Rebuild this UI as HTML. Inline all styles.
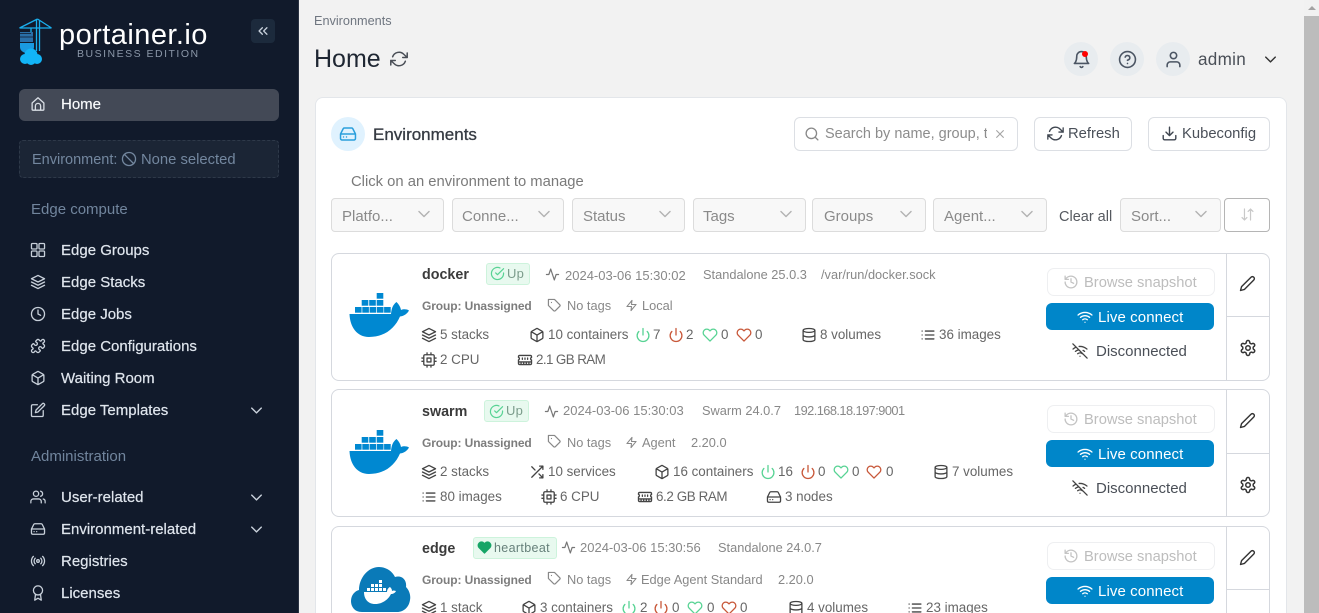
<!DOCTYPE html>
<html><head><meta charset="utf-8"><title>Portainer</title>
<style>
html,body{margin:0;padding:0;width:1319px;height:613px;overflow:hidden;background:#f2f2f2;font-family:"Liberation Sans",sans-serif}
#w{position:relative;width:1319px;height:613px;overflow:hidden;background:#f2f2f2}
.a{position:absolute}
.t{position:absolute;white-space:nowrap;height:20px;line-height:20px;font-size:15px;margin-top:1px}
.i{position:absolute;fill:none;stroke:currentColor;stroke-width:2;stroke-linecap:round;stroke-linejoin:round;width:14px;height:14px;overflow:visible;transform:scale(1.12)}
.s16{width:16px;height:16px}
.n{left:61px;color:#dfe5ed;-webkit-text-stroke:.2px #dfe5ed}
.h{left:31px;color:#71859d}
.ni{left:31px;color:#c8d0da}
.cv{width:17px;height:17px;margin:-1.5px 0 0 -1.5px;stroke-width:1.8}
.f{position:absolute;top:198px;height:32px;background:#f8f8f8;border:1px solid #dcdcdc;border-radius:4px}
.ft{color:#8a8a8a;top:206px}
.chv{color:#b3b3b3;top:207px;width:18px;height:18px;margin:-2px 0 0 -2px;stroke-width:1.7}
.row{position:absolute;left:331px;width:937px;height:126px;border:1px solid #d5d8de;border-radius:8px;background:#fff}
.nm{left:422px;font-weight:bold;font-size:14.3px;color:#3b3b3b}
.g{font-size:12.8px;color:#888;margin-top:0}
.dt{font-size:13px}
.gb{left:422px;font-size:12px;font-weight:bold;color:#7d7d7d;letter-spacing:-.1px;margin-top:0}
.d{font-size:13.4px;color:#666;margin-top:0}
.ic{color:#444}
.ig{color:#58d394}.ir{color:#c8583a}
.bs{position:absolute;left:1047px;width:166px;height:26px;border:1px solid #eeeff1;border-radius:7px;background:#fff}
.lc{position:absolute;left:1046px;width:168px;height:27px;background:#0086c9;border-radius:6px}
.badge{position:absolute;height:20px;background:#e8f9ef;border:1px solid #cdf3dc;border-radius:3px}
.br{left:1084px;color:#bdbdbd;font-size:14.7px}
.lt{left:1098px;color:#fff;letter-spacing:.1px}
.dc{left:1096px;color:#4a4f57}
</style></head>
<body><div id="w">
<svg width="0" height="0" style="position:absolute"><defs>
<symbol id="home" viewBox="0 0 24 24"><path d="M3 10.5l9-8 9 8V20a1.5 1.5 0 0 1-1.5 1.5h-15A1.5 1.5 0 0 1 3 20zM8 21v-6a4 4 0 0 1 8 0v6"/></symbol>
<symbol id="grid" viewBox="0 0 24 24"><rect x="2" y="2" width="8.5" height="8.5" rx="1.5"/><rect x="13.5" y="2" width="8.5" height="8.5" rx="1.5"/><rect x="13.5" y="13.5" width="8.5" height="8.5" rx="1.5"/><rect x="2" y="13.5" width="8.5" height="8.5" rx="1.5"/></symbol>
<symbol id="layers" viewBox="0 0 24 24"><path d="M12 2L2 7l10 5 10-5-10-5zM2 17l10 5 10-5M2 12l10 5 10-5"/></symbol>
<symbol id="clock" viewBox="0 0 24 24"><circle cx="12" cy="12" r="10"/><path d="M12 6v6l4 2"/></symbol>
<symbol id="puzzle" viewBox="0 0 24 24"><path d="M19.439 7.85c-.049.322.059.648.289.878l1.568 1.568c.47.47.706 1.087.706 1.704s-.235 1.233-.706 1.704l-1.611 1.611a.98.98 0 0 1-.837.276c-.47-.07-.802-.48-.968-.925a2.501 2.501 0 1 0-3.214 3.214c.446.166.855.497.925.968a.979.979 0 0 1-.276.837l-1.61 1.61a2.404 2.404 0 0 1-1.705.707 2.402 2.402 0 0 1-1.704-.706l-1.568-1.568a1.026 1.026 0 0 0-.877-.29c-.493.074-.84.504-1.02.968a2.5 2.5 0 1 1-3.237-3.237c.464-.18.894-.527.967-1.02a1.026 1.026 0 0 0-.289-.877l-1.568-1.568A2.402 2.402 0 0 1 1.998 12c0-.617.236-1.234.706-1.704L4.23 8.77c.24-.24.581-.353.917-.303.515.077.877.528 1.073 1.01a2.5 2.5 0 1 0 3.259-3.259c-.482-.196-.933-.558-1.01-1.073-.05-.336.062-.676.303-.917l1.525-1.525A2.402 2.402 0 0 1 12 1.998c.617 0 1.234.236 1.704.706l1.568 1.568c.23.23.556.338.877.29.493-.074.84-.504 1.02-.968a2.5 2.5 0 1 1 3.237 3.237c-.464.18-.894.527-.967 1.02Z"/></symbol>
<symbol id="box" viewBox="0 0 24 24"><path d="M21 16V8a2 2 0 0 0-1-1.73l-7-4a2 2 0 0 0-2 0l-7 4A2 2 0 0 0 3 8v8a2 2 0 0 0 1 1.73l7 4a2 2 0 0 0 2 0l7-4A2 2 0 0 0 21 16zM3.27 6.96L12 12.01l8.73-5.05M12 22.08V12"/></symbol>
<symbol id="edit" viewBox="0 0 24 24"><path d="M11 4H4a2 2 0 0 0-2 2v14a2 2 0 0 0 2 2h14a2 2 0 0 0 2-2v-7M18.5 2.5a2.121 2.121 0 0 1 3 3L12 15l-4 1 1-4 9.5-9.5z"/></symbol>
<symbol id="users" viewBox="0 0 24 24"><path d="M17 21v-2a4 4 0 0 0-4-4H5a4 4 0 0 0-4 4v2M9 3a4 4 0 1 0 0 8 4 4 0 0 0 0-8M23 21v-2a4 4 0 0 0-3-3.87M16 3.13a4 4 0 0 1 0 7.75"/></symbol>
<symbol id="hdd" viewBox="0 0 24 24"><path d="M22 12H2M5.45 5.11L2 12v6a2 2 0 0 0 2 2h16a2 2 0 0 0 2-2v-6l-3.45-6.89A2 2 0 0 0 16.76 4H7.24a2 2 0 0 0-1.79 1.11zM6 16h.01M10 16h.01"/></symbol>
<symbol id="radio" viewBox="0 0 24 24"><circle cx="12" cy="12" r="2"/><path d="M16.24 7.76a6 6 0 0 1 0 8.49m-8.48-.01a6 6 0 0 1 0-8.49m11.31-2.82a10 10 0 0 1 0 14.14m-14.14 0a10 10 0 0 1 0-14.14"/></symbol>
<symbol id="award" viewBox="0 0 24 24"><circle cx="12" cy="8" r="7"/><path d="M8.21 13.89L7 23l5-3 5 3-1.21-9.12"/></symbol>
<symbol id="refresh" viewBox="0 0 24 24"><path d="M23 4v6h-6M1 20v-6h6M3.51 9a9 9 0 0 1 14.85-3.36L23 10M1 14l4.64 4.36A9 9 0 0 0 20.49 15"/></symbol>
<symbol id="bell" viewBox="0 0 24 24"><path d="M18 8A6 6 0 0 0 6 8c0 7-3 9-3 9h18s-3-2-3-9M13.73 21a2 2 0 0 1-3.46 0"/></symbol>
<symbol id="help" viewBox="0 0 24 24"><circle cx="12" cy="12" r="10"/><path d="M9.09 9a3 3 0 0 1 5.83 1c0 2-3 3-3 3M12 17h.01"/></symbol>
<symbol id="user" viewBox="0 0 24 24"><path d="M20 21v-2a4 4 0 0 0-4-4H8a4 4 0 0 0-4 4v2"/><circle cx="12" cy="7" r="4"/></symbol>
<symbol id="search" viewBox="0 0 24 24"><circle cx="11" cy="11" r="8"/><path d="M21 21l-4.35-4.35"/></symbol>
<symbol id="x" viewBox="0 0 24 24"><path d="M18 6L6 18M6 6l12 12"/></symbol>
<symbol id="download" viewBox="0 0 24 24"><path d="M21 15v4a2 2 0 0 1-2 2H5a2 2 0 0 1-2-2v-4M7 10l5 5 5-5M12 15V3"/></symbol>
<symbol id="chev" viewBox="0 0 24 24"><path d="M6 9l6 6 6-6"/></symbol>
<symbol id="activity" viewBox="0 0 24 24"><path d="M22 12h-4l-3 9L9 3l-3 9H2"/></symbol>
<symbol id="tag" viewBox="0 0 24 24"><path d="M20.59 13.41l-7.17 7.17a2 2 0 0 1-2.83 0L2 12V2h10l8.59 8.59a2 2 0 0 1 0 2.82zM7 7h.01"/></symbol>
<symbol id="zap" viewBox="0 0 24 24"><path d="M13 2L3 14h9l-1 8 10-12h-9l1-8z"/></symbol>
<symbol id="power" viewBox="0 0 24 24"><path d="M12 2v10M18.4 6.6a9 9 0 1 1-12.77.04"/></symbol>
<symbol id="heart" viewBox="0 0 24 24"><path d="M20.84 4.61a5.5 5.5 0 0 0-7.78 0L12 5.67l-1.06-1.06a5.5 5.5 0 0 0-7.78 7.78l1.06 1.06L12 21.23l7.78-7.78 1.06-1.06a5.5 5.5 0 0 0 0-7.78z"/></symbol>
<symbol id="db" viewBox="0 0 24 24"><ellipse cx="12" cy="5" rx="9" ry="3"/><path d="M21 12c0 1.66-4 3-9 3s-9-1.34-9-3M3 5v14c0 1.66 4 3 9 3s9-1.34 9-3V5"/></symbol>
<symbol id="list" viewBox="0 0 24 24"><path d="M8 6h13M8 12h13M8 18h13M3 6h.01M3 12h.01M3 18h.01"/></symbol>
<symbol id="cpu" viewBox="0 0 24 24"><rect x="4" y="4" width="16" height="16" rx="2"/><rect x="9" y="9" width="6" height="6"/><path d="M9 1v3M15 1v3M9 20v3M15 20v3M20 9h3M20 14h3M1 9h3M1 14h3"/></symbol>
<symbol id="mem" viewBox="0 0 24 24"><path d="M6 19v-3M10 19v-3M14 19v-3M18 19v-3M8 11V9M16 11V9M12 11V9M2 15h20M2 7a2 2 0 0 1 2-2h16a2 2 0 0 1 2 2v1.1a2 2 0 0 0 0 3.837V17a2 2 0 0 1-2 2H4a2 2 0 0 1-2-2v-5.1a2 2 0 0 0 0-3.837Z"/></symbol>
<symbol id="history" viewBox="0 0 24 24"><path d="M3 12a9 9 0 1 0 9-9 9.75 9.75 0 0 0-6.74 2.74L3 8M3 3v5h5M12 7v5l4 2"/></symbol>
<symbol id="wifi" viewBox="0 0 24 24"><path d="M5 12.55a11 11 0 0 1 14.08 0M1.42 9a16 16 0 0 1 21.16 0M8.53 16.11a6 6 0 0 1 6.95 0M12 20h.01"/></symbol>
<symbol id="wifioff" viewBox="0 0 24 24"><path d="M1 1l22 22M16.72 11.06A10.94 10.94 0 0 1 19 12.55M5 12.55a10.94 10.94 0 0 1 5.17-2.39M10.71 5.05A16 16 0 0 1 22.58 9M1.42 9a15.91 15.91 0 0 1 4.7-2.88M8.53 16.11a6 6 0 0 1 6.95 0M12 20h.01"/></symbol>
<symbol id="pencil" viewBox="0 0 24 24"><path d="M17 3a2.828 2.828 0 1 1 4 4L7.5 20.5 2 22l1.5-5.5L17 3z"/></symbol>
<symbol id="gear" viewBox="0 0 24 24"><path d="M12.22 2h-.44a2 2 0 0 0-2 2v.18a2 2 0 0 1-1 1.73l-.43.25a2 2 0 0 1-2 0l-.15-.08a2 2 0 0 0-2.73.73l-.22.38a2 2 0 0 0 .73 2.73l.15.1a2 2 0 0 1 1 1.72v.51a2 2 0 0 1-1 1.74l-.15.09a2 2 0 0 0-.73 2.73l.22.38a2 2 0 0 0 2.73.73l.15-.08a2 2 0 0 1 2 0l.43.25a2 2 0 0 1 1 1.73V20a2 2 0 0 0 2 2h.44a2 2 0 0 0 2-2v-.18a2 2 0 0 1 1-1.73l.43-.25a2 2 0 0 1 2 0l.15.08a2 2 0 0 0 2.73-.73l.22-.39a2 2 0 0 0-.73-2.73l-.15-.08a2 2 0 0 1-1-1.74v-.5a2 2 0 0 1 1-1.74l.15-.09a2 2 0 0 0 .73-2.73l-.22-.38a2 2 0 0 0-2.73-.73l-.15.08a2 2 0 0 1-2 0l-.43-.25a2 2 0 0 1-1-1.73V4a2 2 0 0 0-2-2z"/><circle cx="12" cy="12" r="3"/></symbol>
<symbol id="shuffle" viewBox="0 0 24 24"><path d="M16 3h5v5M4 20L21 3M21 16v5h-5M15 15l6 6M4 4l5 5"/></symbol>
<symbol id="check" viewBox="0 0 24 24"><path d="M22 11.08V12a10 10 0 1 1-5.93-9.14M22 4L12 14.01l-3-3"/></symbol>
<symbol id="ban" viewBox="0 0 24 24"><circle cx="12" cy="12" r="10"/><path d="M4.93 4.93l14.14 14.14"/></symbol>
<symbol id="dchev" viewBox="0 0 24 24"><path d="M11 17l-5-5 5-5M18 17l-5-5 5-5"/></symbol>
<symbol id="sort" viewBox="0 0 24 24"><path d="M11 17l-4 4-4-4M7 21V3M21 7l-4-4-4 4M17 3v18"/></symbol>
<symbol id="whale" viewBox="0 0 60 45"><g fill="#0088d1" stroke="none"><rect x="27.7" y="0" width="6.6" height="5.7"/><rect x="12.7" y="7" width="6.6" height="5.7"/><rect x="20.2" y="7" width="6.6" height="5.7"/><rect x="27.7" y="7" width="6.6" height="5.7"/><rect x="6" y="14" width="6.6" height="5.7"/><rect x="13.3" y="14" width="6.6" height="5.7"/><rect x="20.6" y="14" width="6.6" height="5.7"/><rect x="27.9" y="14" width="6.6" height="5.7"/><rect x="35.1" y="14" width="6.6" height="5.7"/><path d="M.5 21H42C42.5 16 43.5 12 47.5 9 50 11.5 51.5 14 52 17 54.5 16 57.5 16 60 17.5 58 21 55 23 51 23.5 46 35 36 44 20 44 8 44 1 34 .5 21Z"/></g></symbol>
</defs></svg>

<!-- sidebar -->
<div class="a" style="left:0;top:0;width:298px;height:613px;background:#111a2b;border-right:1px solid #2a3242"></div>
<svg class="a" style="left:18px;top:18px;width:36px;height:48px" viewBox="0 0 36 48" fill="none">
<g stroke="#1ab0ef" stroke-width="1.3"><path d="M1.5 10H33.5M19.5 1L1.5 10M19.5 1L33.5 10M18.5 2V33M21.5 2V33M13 10v4"/></g>
<rect x="2" y="14" width="13" height="10" fill="#2a6fa8"/>
<path d="M2 15.5h11M2 19h13" stroke="#111a2b" stroke-width=".8"/>
<path d="M2 25h14v4a7 6 0 0 1-14 0z" fill="#1a9ae0"/>
<g fill="#12b5f7"><circle cx="7" cy="41" r="5"/><circle cx="13" cy="37" r="6.5"/><circle cx="19" cy="41" r="5"/><circle cx="13" cy="42" r="5"/></g>
</svg>
<div class="t" style="left:59px;top:24px;color:#fff;font-size:29px;letter-spacing:.45px">portainer.io</div>
<div class="t" style="left:77px;top:43px;color:#8b97a8;font-size:10.5px;letter-spacing:1.5px">BUSINESS EDITION</div>
<div class="a" style="left:251px;top:19px;width:24px;height:24px;background:#1c2a3c;border-radius:4px"></div>
<svg class="i" style="left:256px;top:24px;color:#c7d0db"><use href="#dchev"/></svg>

<div class="a" style="left:19px;top:89px;width:260px;height:32px;background:#434956;border-radius:6px"></div>
<svg class="i" style="left:31px;top:97px;color:#d9dee5"><use href="#home"/></svg>
<div class="t n" style="top:94px;color:#fff">Home</div>
<div class="a" style="left:19px;top:140px;width:258px;height:36px;background:#1b2535;border:1px dashed #2e3949;border-radius:4px"></div>
<div class="t" style="left:32px;top:149px;color:#73879f;font-size:14.5px">Environment:</div>
<svg class="i" style="left:122px;top:152px;color:#73879f"><use href="#ban"/></svg>
<div class="t" style="left:141px;top:149px;color:#73879f;font-size:14.8px">None selected</div>

<div class="t h" style="top:199px">Edge compute</div>
<svg class="i ni" style="top:243px"><use href="#grid"/></svg><div class="t n" style="top:240px">Edge Groups</div>
<svg class="i ni" style="top:275px"><use href="#layers"/></svg><div class="t n" style="top:272px">Edge Stacks</div>
<svg class="i ni" style="top:307px"><use href="#clock"/></svg><div class="t n" style="top:304px">Edge Jobs</div>
<svg class="i ni" style="top:339px"><use href="#puzzle"/></svg><div class="t n" style="top:336px">Edge Configurations</div>
<svg class="i ni" style="top:371px"><use href="#box"/></svg><div class="t n" style="top:368px">Waiting Room</div>
<svg class="i ni" style="top:403px"><use href="#edit"/></svg><div class="t n" style="top:400px">Edge Templates</div>
<svg class="i ni cv" style="left:249px;top:403px"><use href="#chev"/></svg>

<div class="t h" style="top:446px">Administration</div>
<svg class="i ni" style="top:490px"><use href="#users"/></svg><div class="t n" style="top:487px">User-related</div>
<svg class="i ni cv" style="left:249px;top:490px"><use href="#chev"/></svg>
<svg class="i ni" style="top:522px"><use href="#hdd"/></svg><div class="t n" style="top:519px">Environment-related</div>
<svg class="i ni cv" style="left:249px;top:522px"><use href="#chev"/></svg>
<svg class="i ni" style="top:554px"><use href="#radio"/></svg><div class="t n" style="top:551px">Registries</div>
<svg class="i ni" style="top:586px"><use href="#award"/></svg><div class="t n" style="top:583px">Licenses</div>

<!-- header -->
<div class="t" style="left:314px;top:10px;font-size:12.7px;color:#6f7680">Environments</div>
<div class="t" style="left:314px;top:48px;font-size:25px;color:#1f2733">Home</div>
<svg class="i s16" style="left:391px;top:51px;color:#4a4f57"><use href="#refresh"/></svg>

<div class="a" style="left:1064px;top:42px;width:34px;height:34px;border-radius:50%;background:#e8ecef"></div>
<svg class="i" style="left:1073px;top:51px;color:#4b5563;width:17px;height:17px"><use href="#bell"/></svg>
<div class="a" style="left:1082px;top:51px;width:6px;height:6px;border-radius:50%;background:#f00"></div>
<div class="a" style="left:1110px;top:42px;width:34px;height:34px;border-radius:50%;background:#e8ecef"></div>
<svg class="i" style="left:1119px;top:51px;color:#4b5563;width:17px;height:17px"><use href="#help"/></svg>
<div class="a" style="left:1156px;top:42px;width:34px;height:34px;border-radius:50%;background:#e8ecef"></div>
<svg class="i" style="left:1165px;top:51px;color:#4b5563;width:17px;height:17px"><use href="#user"/></svg>
<div class="t" style="left:1198px;top:49px;font-size:17.1px;color:#4b5058;letter-spacing:.3px">admin</div>
<svg class="i cv" style="left:1263px;top:52px;color:#333"><use href="#chev"/></svg>

<!-- card -->
<div class="a" style="left:315px;top:97px;width:970px;height:515px;background:#fff;border:1px solid #e3e6ea;border-bottom:none;border-radius:8px 8px 0 0"></div>
<div class="a" style="left:331px;top:117px;width:34px;height:34px;border-radius:50%;background:#e0f2fe"></div>
<svg class="i s16" style="left:340px;top:126px;color:#2a9fdc"><use href="#hdd"/></svg>
<div class="t" style="left:373px;top:124px;font-size:17px;color:#353a42;-webkit-text-stroke:.3px #353a42">Environments</div>

<div class="a" style="left:794px;top:117px;width:222px;height:32px;border:1px solid #dcdfe4;border-radius:6px;background:#fff"></div>
<svg class="i" style="left:805px;top:127px;color:#888"><use href="#search"/></svg>
<div class="a" style="left:825px;top:124px;width:162px;height:20px;overflow:hidden"><div class="t" style="left:0;top:-1px;color:#8c8c8c;font-size:14.5px">Search by name, group, tag, status, URL...</div></div>
<svg class="i" style="left:994px;top:128px;color:#a5a5a5;width:12px;height:12px"><use href="#x"/></svg>

<div class="a" style="left:1034px;top:117px;width:96px;height:32px;border:1px solid #dcdfe4;border-radius:6px;background:#fff"></div>
<svg class="i" style="left:1048px;top:126px;color:#3f4650;width:15px;height:15px"><use href="#refresh"/></svg>
<div class="t" style="left:1068px;top:123px;color:#4a5059;font-size:14.8px">Refresh</div>
<div class="a" style="left:1148px;top:117px;width:120px;height:32px;border:1px solid #dcdfe4;border-radius:6px;background:#fff"></div>
<svg class="i" style="left:1162px;top:126px;color:#3f4650;width:15px;height:15px"><use href="#download"/></svg>
<div class="t" style="left:1182px;top:123px;color:#4a5059;font-size:14.8px">Kubeconfig</div>

<div class="t" style="left:351px;top:171px;color:#7a7a7a;font-size:14.8px">Click on an environment to manage</div>

<div class="f" style="left:331px;width:111px"></div><div class="t ft" style="left:342px">Platfo...</div><svg class="i chv" style="left:417px"><use href="#chev"/></svg>
<div class="f" style="left:452px;width:110px"></div><div class="t ft" style="left:462px">Conne...</div><svg class="i chv" style="left:537px"><use href="#chev"/></svg>
<div class="f" style="left:572px;width:111px"></div><div class="t ft" style="left:583px">Status</div><svg class="i chv" style="left:658px"><use href="#chev"/></svg>
<div class="f" style="left:693px;width:111px"></div><div class="t ft" style="left:703px">Tags</div><svg class="i chv" style="left:779px"><use href="#chev"/></svg>
<div class="f" style="left:812px;width:112px"></div><div class="t ft" style="left:824px">Groups</div><svg class="i chv" style="left:899px"><use href="#chev"/></svg>
<div class="f" style="left:933px;width:112px"></div><div class="t ft" style="left:944px">Agent...</div><svg class="i chv" style="left:1020px"><use href="#chev"/></svg>
<div class="t" style="left:1059px;top:206px;color:#55595f;font-size:14.5px">Clear all</div>
<div class="f" style="left:1120px;width:99px"></div><div class="t ft" style="left:1131px">Sort...</div><svg class="i chv" style="left:1194px"><use href="#chev"/></svg>
<div class="a" style="left:1224px;top:198px;width:44px;height:32px;border:1px solid #b5b5b5;border-radius:4px;background:#fff"></div>
<svg class="i" style="left:1241px;top:208px;color:#c9c9c9;width:13px;height:13px"><use href="#sort"/></svg>

<!-- row 1 -->
<div class="row" style="top:253px"></div>
<div class="a" style="left:1226px;top:254px;width:1px;height:126px;background:#d5d8de"></div>
<div class="a" style="left:1227px;top:316px;width:42px;height:1px;background:#d5d8de"></div>
<svg class="a" style="left:349px;top:293px;width:60px;height:45px"><use href="#whale"/></svg>
<div class="t nm" style="top:264px">docker</div>
<div class="badge" style="left:486px;top:263px;width:42px"></div>
<svg class="i ig" style="left:491px;top:267px;width:13px;height:13px"><use href="#check"/></svg>
<div class="t" style="left:507px;top:264px;font-size:13px;color:#7b9c8b;letter-spacing:.2px;margin-top:0">Up</div>
<svg class="i" style="left:546px;top:268px;color:#777;width:13px;height:13px"><use href="#activity"/></svg>
<div class="t g dt" style="left:565px;top:266px">2024-03-06 15:30:02</div>
<div class="t g" style="left:703px;top:265px">Standalone 25.0.3</div>
<div class="t g" style="left:821px;top:265px">/var/run/docker.sock</div>
<div class="t gb" style="top:296px">Group: Unassigned</div>
<svg class="i" style="left:548px;top:299px;color:#888;width:13px;height:13px"><use href="#tag"/></svg>
<div class="t g" style="left:567px;top:296px">No tags</div>
<svg class="i" style="left:626px;top:300px;color:#888;width:11px;height:11px"><use href="#zap"/></svg>
<div class="t g" style="left:642px;top:296px">Local</div>

<svg class="i ic" style="left:422px;top:328px"><use href="#layers"/></svg><div class="t d" style="left:440px;top:325px">5 stacks</div>
<svg class="i ic" style="left:530px;top:328px"><use href="#box"/></svg><div class="t d" style="left:548px;top:325px">10 containers</div>
<svg class="i ig" style="left:636px;top:328px"><use href="#power"/></svg><div class="t d" style="left:653px;top:325px">7</div>
<svg class="i ir" style="left:669px;top:328px"><use href="#power"/></svg><div class="t d" style="left:686px;top:325px">2</div>
<svg class="i ig" style="left:703px;top:328px"><use href="#heart"/></svg><div class="t d" style="left:721px;top:325px">0</div>
<svg class="i ir" style="left:737px;top:328px"><use href="#heart"/></svg><div class="t d" style="left:755px;top:325px">0</div>
<svg class="i ic" style="left:802px;top:328px"><use href="#db"/></svg><div class="t d" style="left:820px;top:325px">8 volumes</div>
<svg class="i ic" style="left:921px;top:328px"><use href="#list"/></svg><div class="t d" style="left:939px;top:325px">36 images</div>
<svg class="i ic" style="left:422px;top:353px"><use href="#cpu"/></svg><div class="t d" style="left:440px;top:350px">2 CPU</div>
<svg class="i ic" style="left:518px;top:353px"><use href="#mem"/></svg><div class="t d" style="left:536px;top:350px;letter-spacing:-.6px">2.1 GB RAM</div>

<div class="bs" style="top:268px"></div>
<svg class="i" style="left:1064px;top:275px;color:#c4c4c4"><use href="#history"/></svg>
<div class="t br" style="top:272px">Browse snapshot</div>
<div class="lc" style="top:303px"></div>
<svg class="i" style="left:1078px;top:310px;color:#fff"><use href="#wifi"/></svg>
<div class="t lt" style="top:307px">Live connect</div>
<svg class="i" style="left:1073px;top:344px;color:#444"><use href="#wifioff"/></svg>
<div class="t dc" style="top:341px">Disconnected</div>
<svg class="i" style="left:1240px;top:276px;color:#333;width:15px;height:15px"><use href="#pencil"/></svg>
<svg class="i s16" style="left:1240px;top:340px;color:#333"><use href="#gear"/></svg>

<!-- row 2 -->
<div class="row" style="top:389px"></div>
<div class="a" style="left:1226px;top:390px;width:1px;height:126px;background:#d5d8de"></div>
<div class="a" style="left:1227px;top:453px;width:42px;height:1px;background:#d5d8de"></div>
<svg class="a" style="left:349px;top:430px;width:60px;height:45px"><use href="#whale"/></svg>
<div class="t nm" style="top:401px">swarm</div>
<div class="badge" style="left:484px;top:400px;width:43px"></div>
<svg class="i ig" style="left:490px;top:405px;width:13px;height:13px"><use href="#check"/></svg>
<div class="t" style="left:506px;top:401px;font-size:13px;color:#7b9c8b;letter-spacing:.2px;margin-top:0">Up</div>
<svg class="i" style="left:545px;top:405px;color:#777;width:13px;height:13px"><use href="#activity"/></svg>
<div class="t g dt" style="left:563px;top:401px">2024-03-06 15:30:03</div>
<div class="t g" style="left:702px;top:401px">Swarm 24.0.7</div>
<div class="t g" style="left:794px;top:401px;letter-spacing:-.55px">192.168.18.197:9001</div>
<div class="t gb" style="top:433px">Group: Unassigned</div>
<svg class="i" style="left:548px;top:435px;color:#888;width:13px;height:13px"><use href="#tag"/></svg>
<div class="t g" style="left:567px;top:433px">No tags</div>
<svg class="i" style="left:626px;top:437px;color:#888;width:11px;height:11px"><use href="#zap"/></svg>
<div class="t g" style="left:642px;top:433px">Agent</div>
<div class="t g" style="left:691px;top:433px">2.20.0</div>

<svg class="i ic" style="left:422px;top:465px"><use href="#layers"/></svg><div class="t d" style="left:440px;top:462px">2 stacks</div>
<svg class="i ic" style="left:530px;top:465px"><use href="#shuffle"/></svg><div class="t d" style="left:548px;top:462px">10 services</div>
<svg class="i ic" style="left:655px;top:465px"><use href="#box"/></svg><div class="t d" style="left:673px;top:462px">16 containers</div>
<svg class="i ig" style="left:761px;top:465px"><use href="#power"/></svg><div class="t d" style="left:778px;top:462px">16</div>
<svg class="i ir" style="left:801px;top:465px"><use href="#power"/></svg><div class="t d" style="left:818px;top:462px">0</div>
<svg class="i ig" style="left:834px;top:465px"><use href="#heart"/></svg><div class="t d" style="left:852px;top:462px">0</div>
<svg class="i ir" style="left:867px;top:465px"><use href="#heart"/></svg><div class="t d" style="left:886px;top:462px">0</div>
<svg class="i ic" style="left:934px;top:465px"><use href="#db"/></svg><div class="t d" style="left:952px;top:462px">7 volumes</div>
<svg class="i ic" style="left:422px;top:490px"><use href="#list"/></svg><div class="t d" style="left:440px;top:487px">80 images</div>
<svg class="i ic" style="left:542px;top:490px"><use href="#cpu"/></svg><div class="t d" style="left:560px;top:487px">6 CPU</div>
<svg class="i ic" style="left:638px;top:490px"><use href="#mem"/></svg><div class="t d" style="left:656px;top:487px;letter-spacing:-.4px">6.2 GB RAM</div>
<svg class="i ic" style="left:767px;top:490px"><use href="#hdd"/></svg><div class="t d" style="left:785px;top:487px">3 nodes</div>

<div class="bs" style="top:405px"></div>
<svg class="i" style="left:1064px;top:412px;color:#c4c4c4"><use href="#history"/></svg>
<div class="t br" style="top:409px">Browse snapshot</div>
<div class="lc" style="top:440px"></div>
<svg class="i" style="left:1078px;top:447px;color:#fff"><use href="#wifi"/></svg>
<div class="t lt" style="top:444px">Live connect</div>
<svg class="i" style="left:1073px;top:481px;color:#444"><use href="#wifioff"/></svg>
<div class="t dc" style="top:478px">Disconnected</div>
<svg class="i" style="left:1240px;top:413px;color:#333;width:15px;height:15px"><use href="#pencil"/></svg>
<svg class="i s16" style="left:1240px;top:477px;color:#333"><use href="#gear"/></svg>

<!-- row 3 -->
<div class="row" style="top:526px;height:86px;border-bottom:none;border-radius:8px 8px 0 0"></div>
<div class="a" style="left:1226px;top:527px;width:1px;height:86px;background:#d5d8de"></div>
<div class="a" style="left:1227px;top:589px;width:42px;height:1px;background:#d5d8de"></div>
<svg class="a" style="left:350px;top:566px;width:61px;height:47px" viewBox="0 0 61 47">
<path d="M12 46C4 46 1 40 1 35 1 29 5 25 9 24 9 12 18 1 29 1 36 1 42 5 45 11 52 9 57 14 56 21 59 24 61 29 60 34 59 41 54 46 47 46Z" fill="#0a7ab8"/>
<g fill="#fff"><rect x="21" y="18" width="3" height="3"/><rect x="25" y="18" width="3" height="3"/><rect x="29" y="18" width="3" height="3"/><rect x="29" y="14" width="3" height="3"/><rect x="17" y="22" width="3" height="3"/><rect x="21" y="22" width="3" height="3"/><rect x="25" y="22" width="3" height="3"/><rect x="29" y="22" width="3" height="3"/><rect x="33" y="22" width="3" height="3"/><path d="M14 26H37C37 24 38 22 40 21 41 22 42 23 42 25 44 24 45 25 46 25 45 27 43 28 41 28 38 34 32 38 25 38 18 38 14 33 14 26Z"/></g>
</svg>
<div class="t nm" style="top:538px">edge</div>
<div class="badge" style="left:473px;top:537px;width:82px"></div>
<svg class="i" style="left:478px;top:541px;color:#17a567;fill:#17a567;width:13px;height:13px"><use href="#heart"/></svg>
<div class="t" style="left:494px;top:537px;font-size:12.5px;color:#66807a;letter-spacing:.35px">heartbeat</div>
<svg class="i" style="left:562px;top:541px;color:#777;width:13px;height:13px"><use href="#activity"/></svg>
<div class="t g dt" style="left:580px;top:538px">2024-03-06 15:30:56</div>
<div class="t g" style="left:718px;top:538px">Standalone 24.0.7</div>
<div class="t gb" style="top:570px">Group: Unassigned</div>
<svg class="i" style="left:548px;top:572px;color:#888;width:13px;height:13px"><use href="#tag"/></svg>
<div class="t g" style="left:567px;top:570px">No tags</div>
<svg class="i" style="left:626px;top:574px;color:#888;width:11px;height:11px"><use href="#zap"/></svg>
<div class="t g" style="left:641px;top:570px">Edge Agent Standard</div>
<div class="t g" style="left:778px;top:570px">2.20.0</div>

<div class="a" style="left:0;top:598px;width:1040px;height:15px;overflow:hidden">
<svg class="i ic" style="left:422px;top:3px"><use href="#layers"/></svg><div class="t d" style="left:440px;top:0">1 stack</div>
<svg class="i ic" style="left:522px;top:3px"><use href="#box"/></svg><div class="t d" style="left:540px;top:0">3 containers</div>
<svg class="i ig" style="left:622px;top:3px"><use href="#power"/></svg><div class="t d" style="left:640px;top:0">2</div>
<svg class="i ir" style="left:654px;top:3px"><use href="#power"/></svg><div class="t d" style="left:672px;top:0">0</div>
<svg class="i ig" style="left:688px;top:3px"><use href="#heart"/></svg><div class="t d" style="left:707px;top:0">0</div>
<svg class="i ir" style="left:722px;top:3px"><use href="#heart"/></svg><div class="t d" style="left:740px;top:0">0</div>
<svg class="i ic" style="left:789px;top:3px"><use href="#db"/></svg><div class="t d" style="left:807px;top:0">4 volumes</div>
<svg class="i ic" style="left:908px;top:3px"><use href="#list"/></svg><div class="t d" style="left:926px;top:0">23 images</div>
</div>

<div class="bs" style="top:542px"></div>
<svg class="i" style="left:1064px;top:549px;color:#c4c4c4"><use href="#history"/></svg>
<div class="t br" style="top:546px">Browse snapshot</div>
<div class="lc" style="top:577px"></div>
<svg class="i" style="left:1078px;top:584px;color:#fff"><use href="#wifi"/></svg>
<div class="t lt" style="top:581px">Live connect</div>
<svg class="i" style="left:1240px;top:550px;color:#333;width:15px;height:15px"><use href="#pencil"/></svg>

<!-- scrollbar -->
<div class="a" style="left:1304px;top:0;width:15px;height:613px;background:#f1f1f1"></div>
<div class="a" style="left:1304px;top:16px;width:15px;height:597px;background:#bcbcbc"></div>
<div class="a" style="left:1308px;top:6px;width:0;height:0;border-left:4px solid transparent;border-right:4px solid transparent;border-bottom:4px solid #a3a3a3"></div>
</div></body></html>
